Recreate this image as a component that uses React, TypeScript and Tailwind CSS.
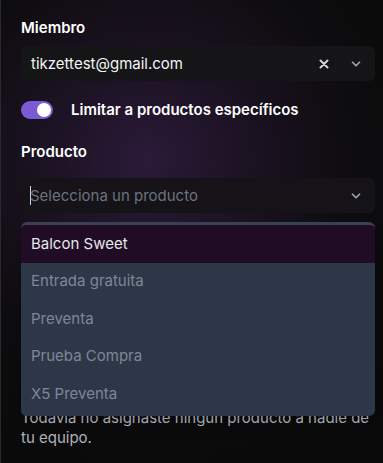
import { ReactElement } from "react";

const products = ["Balcon Sweet", "Entrada gratuita", "Preventa", "Prueba Compra", "X5 Preventa"];

const Chevron = (): ReactElement => (
  <svg width="14" height="14" viewBox="0 0 24 24" fill="none" stroke="#9ca3af" strokeWidth="3" strokeLinecap="round" strokeLinejoin="round">
    <path d="M6 9l6 6 6-6" />
  </svg>
);

const App = (): ReactElement => {
  return (
    <div
      className="h-[463px] w-[383px] overflow-hidden border-l border-[#2a2a2c] bg-[radial-gradient(circle_at_145px_160px,#2b1a38_0px,#1d1325_90px,#0d0c0e_210px,#0a0a0a_320px)] pl-5 pr-2 pt-[18px] text-[15px] text-white"
      style={{ fontFamily: "Inter, 'Noto Sans', sans-serif" }}
    >
      <p className="font-semibold leading-5">Miembro</p>
      <div className="mt-[8px] flex h-[35px] items-center rounded-md bg-[#151416] pl-[10px] pr-3">
        <span className="flex-1 leading-5 text-[#f3f4f6]">tikzettest@gmail.com</span>
        <svg width="12" height="12" viewBox="0 0 24 24" fill="none" stroke="#d1d5db" strokeWidth="4" strokeLinecap="round" className="mr-[19px]">
          <path d="M5 5l14 14M19 5L5 19" />
        </svg>
        <Chevron />
      </div>

      <div className="mt-[19px] flex h-5 items-center">
        <div className="flex h-[18px] w-8 items-center justify-end rounded-full bg-[#7a5bd3] pr-[2px]">
          <div className="h-[14px] w-[14px] rounded-full bg-white" />
        </div>
        <span className="ml-[18px] font-semibold leading-5">Limitar a productos específicos</span>
      </div>

      <p className="mt-[22px] font-semibold leading-5">Producto</p>

      <div className="relative mt-4">
        <div className="flex h-[35px] items-center rounded-md bg-[#151317] pl-[9px] pr-3">
          <span className="-mr-px h-[19px] w-px bg-[#d1d5db]" />
          <span className="flex-1 leading-5 text-[#6b7280]">Selecciona un producto</span>
          <Chevron />
        </div>

        <div className="absolute left-0 right-0 top-[44px] z-10 overflow-hidden rounded-md border-t-[3px] border-[#3a4152] bg-[#2d3748] pb-[3px] shadow-lg">
          {products.map((p, i) => (
            <div
              key={p}
              className={`flex h-[37.5px] items-center px-[10px] leading-5 ${i === 0 ? "bg-[#200d25] text-[#e5e7eb]" : "text-[#7d8799]"}`}
            >
              {p}
            </div>
          ))}
        </div>
      </div>

      <p className="mt-[195px] pr-1 leading-[20px] text-[#aeb3bb]">
        Todavía no asignaste ningún producto a nadie de tu equipo.
      </p>
    </div>
  );
};

export default App;
